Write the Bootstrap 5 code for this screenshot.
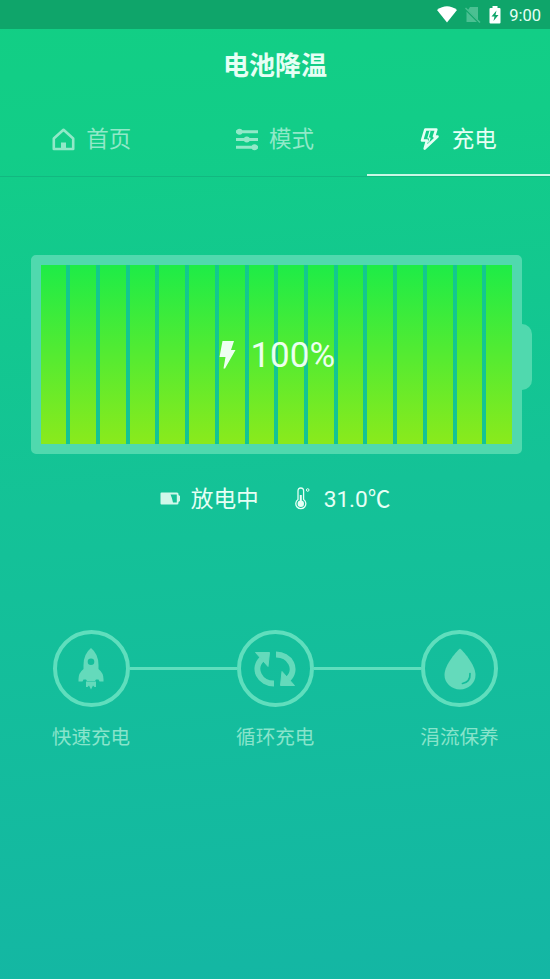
<!DOCTYPE html>
<html lang="zh-CN">
<head>
<meta charset="utf-8">
<meta name="viewport" content="width=device-width, initial-scale=1">
<title>电池降温</title>
<link href="https://cdn.jsdelivr.net/npm/bootstrap@5.3.0/dist/css/bootstrap.min.css" rel="stylesheet">
<style>
body{font-family:Roboto,"Noto Sans CJK SC",sans-serif;background:linear-gradient(175deg,#12cf84 0,#12cd88 15%,#14c297 50%,#14b6a4 100%);height:979px;color:#e6fff5;overflow:hidden}
svg{display:block;flex:none}
.status{height:29px;background:#0fa56a;padding-right:9px;font-size:16.5px;line-height:29px}
.time{padding-top:2px}
.title{height:73px;font-size:26px;font-weight:700;line-height:74px;margin:0}
.tabs{height:75px;border-bottom:1px solid #12b880;font-size:22.5px}
.tab{color:#91e9c8;padding-top:2px;border-bottom:2px solid transparent}
.tab span{padding-top:1px;margin-left:11px}
.tab:hover{color:#e6fff5}
.tab.on{color:#e6fff5;border-color:#c9f7e5}
.tab.on span{margin-left:13px}
.battery{margin:78px 18px 0 30.500px}
.shell{width:492px;height:199px;border:10px solid #50d9ae;border-radius:5px}
.cells{gap:4px}
.cell{background:linear-gradient(#1eec47,#8aea1c)}
.knob{width:10px;height:66px;background:#50d9ae;border-radius:0 10px 10px 0;margin-top:5px}
.level{font-size:35px;line-height:1;color:#edfff0;padding-left:2px}
.pct{margin-left:14px;padding-top:1px}
.info{height:34px;margin-top:27px;font-size:22.7px;line-height:34px}
.state{margin:3px 36px 0 10px}
.temp{margin:3px 0 0 14px;letter-spacing:-.1px}
.stages{margin:115px 52px 0 52.500px}
.ring{width:77px;height:77px;border:4px solid #5fdebd}
.wire{height:3px;background:#5fdebd;margin-top:37px}
.stage{width:77px;color:#88e4cb;font-size:19.6px}
.stage span{line-height:30px;margin-top:16px}
</style>
</head>
<body>
<header class="status d-flex justify-content-end align-items-center">
  <svg width="20" height="17" viewBox="0 0 20 17"><path d="M0 4Q10-3.5 20 4L10 16.5Z" fill="#fff"/></svg>
  <svg class="ms-2" width="16" height="18" viewBox="0 0 16 18"><path d="M5 1H13V14L3 4ZM1.500 5.500 12 16H1.500Z" fill="#4bc092"/><path d="M.500 2 15 16.500" stroke="#4bc092" stroke-width="1.500"/></svg>
  <svg class="ms-2" width="12" height="18" viewBox="0 0 12 18"><path d="M3.500 0H8.500V2H10.500Q11.500 2 11.500 3V16.500Q11.500 17.500 10.500 17.500H1.500Q.500 17.500 .500 16.500V3Q.500 2 1.500 2H3.500Z" fill="#fff"/><path d="M7.500 4.500 2.500 10.500H5.500L4.500 15 9.500 9H6.500Z" fill="#0fa56a"/></svg>
  <span class="time ms-2">9:00</span>
</header>
<h1 class="title text-center">电池降温</h1>
<nav class="tabs d-flex">
  <a class="tab d-flex flex-fill w-100 justify-content-center align-items-center text-decoration-none" href="#">
    <svg width="23" height="23" viewBox="0 0 23 23" fill="none" stroke="currentColor" stroke-width="2.600"><path d="M1.800 10.500V21H21.200V10.500L11.500 1.800Z" stroke-linejoin="round"/><path d="M9 14.500H14V20.500H9Z" fill="currentColor" stroke="none"/></svg>
    <span>首页</span></a>
  <a class="tab d-flex flex-fill w-100 justify-content-center align-items-center text-decoration-none" href="#">
    <svg width="22" height="23" viewBox="0 0 22 23" fill="currentColor"><path d="M0 2.300H22V5.200H0ZM0 10.100H22V13H0ZM0 17.800H22V20.700H0Z"/><circle cx="3.500" cy="3.700" r="3"/><circle cx="10.800" cy="11.500" r="3"/><circle cx="18.500" cy="19.200" r="3"/></svg>
    <span>模式</span></a>
  <a class="tab on d-flex flex-fill w-100 justify-content-center align-items-center text-decoration-none" href="#">
    <svg width="19" height="24" viewBox="0 0 19 24" fill="none" stroke="currentColor" stroke-width="2.600" stroke-linejoin="round"><path d="M5.300 2.500H16.300L14 9.500H17.500L4.700 21.500 7 13.500H2Z"/><path d="M10 4 8 11H10L8.500 15.500" stroke-width="1.200"/></svg>
    <span>充电</span></a>
</nav>
<main>
  <section class="battery d-flex align-items-center">
    <div class="shell position-relative">
      <div class="cells d-flex h-100">
        <div class="cell flex-fill"></div><div class="cell flex-fill"></div><div class="cell flex-fill"></div><div class="cell flex-fill"></div>
        <div class="cell flex-fill"></div><div class="cell flex-fill"></div><div class="cell flex-fill"></div><div class="cell flex-fill"></div>
        <div class="cell flex-fill"></div><div class="cell flex-fill"></div><div class="cell flex-fill"></div><div class="cell flex-fill"></div>
        <div class="cell flex-fill"></div><div class="cell flex-fill"></div><div class="cell flex-fill"></div><div class="cell flex-fill"></div>
      </div>
      <div class="level position-absolute top-0 start-0 w-100 h-100 d-flex justify-content-center align-items-center">
        <svg width="17" height="28" viewBox="0 0 17 28"><path d="M3.500 0H15L12 9H16.500L6 27.500H4.500L6.500 16H.500Z" fill="currentColor"/></svg>
        <span class="pct">100%</span>
      </div>
    </div>
    <div class="knob"></div>
  </section>
  <section class="info d-flex justify-content-center align-items-center">
    <svg width="21" height="13" viewBox="0 0 21 13"><path d="M1.500 .5H17Q18.500 .5 18.500 2V3L20 4V9L18.500 10V11Q18.500 12.500 17 12.500H1.500Q.5 12.500 .5 11.500V1.500Q.5 .5 1.500 .5Z" fill="#d0f8ea"/><path d="M10.500 2.500H16.800V10.500H13Q12 5.500 10.500 2.500Z" fill="#14c297"/></svg>
    <span class="state">放电中</span>
    <svg class="thermo" width="15" height="23" viewBox="0 0 15 23" fill="none" stroke="currentColor"><path d="M3 12.500V4Q3 1 5.800 1T8.600 4V12.500A5 5 0 1 1 3 12.500Z" stroke-width="1.300"/><circle cx="5.800" cy="16.700" r="3.200" fill="currentColor" stroke="none"/><path d="M5.800 8V16" stroke-width="2"/><circle cx="12.700" cy="3" r="1.300"/></svg>
    <span class="temp">31.0℃</span>
  </section>
  <section class="stages d-flex align-items-start">
    <div class="stage d-flex flex-column align-items-center text-nowrap">
      <div class="ring rounded-circle d-flex justify-content-center align-items-center">
        <svg width="26" height="42" viewBox="0 0 26 42" fill="#64dabb"><path fill-rule="evenodd" d="M13 0Q20.500 6 20.500 17V21Q25.500 25 25.500 31V33.500H21.500L20.500 31.500H18L17 33H9L8 31.500H5.500L4.500 33.500H.500V31Q.500 25 5.500 21V17Q5.500 6 13 0ZM13 10.500A3.300 3.300 0 1 0 13 17.100 3.300 3.300 0 1 0 13 10.500Z"/><path d="M8 33.500H18V39H16.500L15 37.500 13 41.500 11 37.500 9.500 39H8Z"/></svg>
      </div>
      <span>快速充电</span>
    </div>
    <div class="wire flex-fill"></div>
    <div class="stage d-flex flex-column align-items-center text-nowrap">
      <div class="ring rounded-circle d-flex justify-content-center align-items-center">
        <svg width="42" height="36" viewBox="0 0 42 36"><path d="M20 32.500A16.500 14.500 0 0 1 8 8M22 3.500A16.500 14.500 0 0 1 34 28" fill="none" stroke="#64dabb" stroke-width="6"/><path d="M1.500 1.500H15.500L14 15.500ZM40.500 34.500H26.500L28 20.500Z" fill="#64dabb" stroke="#64dabb" stroke-linejoin="round"/></svg>
      </div>
      <span>循环充电</span>
    </div>
    <div class="wire flex-fill"></div>
    <div class="stage d-flex flex-column align-items-center text-nowrap">
      <div class="ring rounded-circle d-flex justify-content-center align-items-center">
        <svg width="32" height="42" viewBox="0 0 32 42"><path d="M16 .500C18 2 31.500 16 31.500 27C31.500 35 24.500 41.500 16 41.500S.500 35 .500 27C.500 16 14 2 16 .500Z" fill="#64dabb"/><path d="M26 25.500Q26.500 34 18.500 35.500" fill="none" stroke="#14bd9b" stroke-width="1.700" stroke-linecap="round"/></svg>
      </div>
      <span>涓流保养</span>
    </div>
  </section>
</main>
<script src="https://cdn.jsdelivr.net/npm/bootstrap@5.3.0/dist/js/bootstrap.bundle.min.js"></script>
</body>
</html>
